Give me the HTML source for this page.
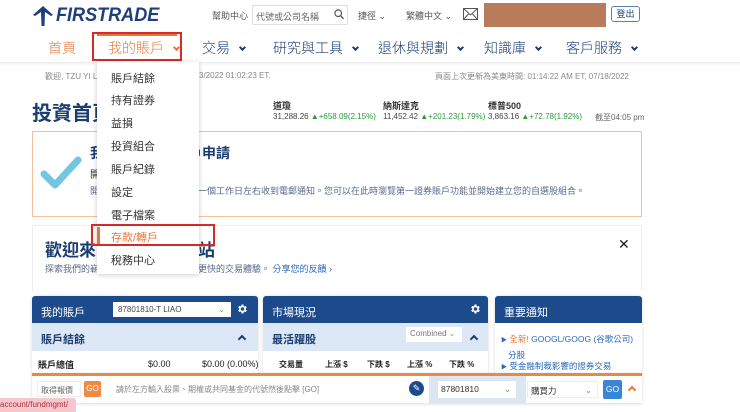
<!DOCTYPE html>
<html><head><meta charset="utf-8"><style>
*{margin:0;padding:0;box-sizing:border-box}
body{width:740px;height:410px;overflow:hidden;background:#fff;font-family:"Liberation Sans","Noto Sans CJK TC",sans-serif;position:relative;color:#333}
.a{position:absolute;white-space:nowrap}
.navy{color:#1c3d72}
.nav{font-size:14px;color:#1c3d72;top:38px;font-weight:300}
.chev{display:inline-block;width:5px;height:5px;border-right:2px solid currentColor;border-bottom:2px solid currentColor;transform:rotate(45deg);margin-left:10px;position:relative;top:-3px}
.dd{font-size:11px;color:#333;left:111px}
.panel{position:absolute;top:296px;background:#fff;box-shadow:0 0 3px rgba(0,0,0,.15);border-radius:3px 3px 0 0;overflow:hidden}
.ph{height:27px;background:#1d4a8a;color:#fff;font-size:11px;padding:8px 9px}
.sh{height:28px;background:#dce8f5;color:#1c3d72;font-size:11px;font-weight:bold;padding:8px 9px;position:relative}
.up{position:absolute;width:6px;height:6px;border-left:2px solid #1c3d72;border-top:2px solid #1c3d72;transform:rotate(45deg)}
</style></head><body>
<svg class="a" style="left:32px;top:6px" width="22" height="20" viewBox="0 0 22 20"><path d="M11 0 L21 9 L19 10 L13 6 L12.5 20 L9.5 20 L9 6 L3 10 L1 9 Z" fill="#1d3f7a"/></svg>
<div class="a" style="left:56px;top:5px;font-size:19px;font-weight:bold;font-style:italic;color:#1d3f7a;transform:scaleX(.95);transform-origin:left">FIRSTRADE</div>
<div class="a" style="left:212px;top:9px;font-size:9px;color:#555">幫助中心</div>
<div class="a" style="left:252px;top:5px;width:96px;height:20px;border:1px solid #ddd;border-radius:2px;font-size:9px;color:#666;padding:4px 3px">代號或公司名稱</div>
<svg class="a" style="left:334px;top:9px" width="10" height="11"><circle cx="4.2" cy="4.2" r="3.3" stroke="#555" stroke-width="1.2" fill="none"/><path d="M6.6 6.6 L9.5 9.8" stroke="#555" stroke-width="1.3"/></svg>
<div class="a" style="left:358px;top:9px;font-size:9px;color:#555">捷徑 ⌄</div>
<div class="a" style="left:406px;top:9px;font-size:9px;color:#555">繁體中文 ⌄</div>
<svg class="a" style="left:463px;top:8px" width="15" height="12"><rect x=".5" y=".5" width="14" height="11" fill="none" stroke="#555"/><path d="M.5 .5 L7.5 7 L14.5 .5 M.5 11.5 L5.5 6 M14.5 11.5 L9.5 6" stroke="#555" fill="none"/></svg>
<div class="a" style="left:484px;top:3px;width:122px;height:24px;background:#b97c5a"></div>
<div class="a" style="left:611px;top:6px;width:29px;height:16px;border:1px solid #5b7fb5;border-radius:3px;font-size:9px;color:#1c3d72;text-align:center;line-height:14px">登出</div>
<div class="a" style="left:0;top:62px;width:740px;height:4px;background:linear-gradient(#eee,#fff)"></div>
<div class="a nav" style="left:48px;color:#e8763a">首頁</div>
<div class="a" style="left:97px;top:33px;width:80px;height:3px;background:#e8763a"></div>
<div class="a nav" style="left:108px;color:#e8763a">我的賬戶<span class="chev"></span></div>
<div class="a" style="left:92px;top:32px;width:90px;height:29px;border:2px solid #d42a2a"></div>
<div class="a nav" style="left:202px">交易<span class="chev"></span></div>
<div class="a nav" style="left:273px">研究與工具<span class="chev"></span></div>
<div class="a nav" style="left:378px">退休與規劃<span class="chev"></span></div>
<div class="a nav" style="left:484px">知識庫<span class="chev"></span></div>
<div class="a nav" style="left:566px">客戶服務<span class="chev"></span></div>
<div class="a" style="left:45px;top:71px;font-size:8px;color:#888">歡迎, TZU YI LIAO</div>
<div class="a" style="left:199px;top:71px;font-size:8px;color:#888">3/2022 01:02:23 ET.</div>
<div class="a" style="left:435px;top:71px;font-size:8px;color:#888">頁面上次更新為美東時間: 01:14:22 AM ET, 07/18/2022</div>
<div class="a navy" style="left:32px;top:97px;font-size:20px;font-weight:bold">投資首頁</div>
<div class="a" style="left:273px;top:99px;font-size:9px;font-weight:bold;color:#333">道瓊</div>
<div class="a" style="left:273px;top:112px;font-size:8px;color:#444">31,288.26 <span style="color:#2a9a3a">▲+658.09(2.15%)</span></div>
<div class="a" style="left:383px;top:99px;font-size:9px;font-weight:bold;color:#333">納斯達克</div>
<div class="a" style="left:383px;top:112px;font-size:8px;color:#444">11,452.42 <span style="color:#2a9a3a">▲+201.23(1.79%)</span></div>
<div class="a" style="left:488px;top:99px;font-size:9px;font-weight:bold;color:#333">標普500</div>
<div class="a" style="left:488px;top:112px;font-size:8px;color:#444">3,863.16 <span style="color:#2a9a3a">▲+72.78(1.92%)</span></div>
<div class="a" style="left:595px;top:112px;font-size:8px;color:#666">截至04:05 pm</div>
<div class="a" style="left:32px;top:131px;width:610px;height:86px;border:1px solid #f3bf9d"></div>
<svg class="a" style="left:40px;top:154px" width="42" height="36"><path d="M4 20 L15 31 L38 6" stroke="#72c6e2" stroke-width="7" fill="none" stroke-linecap="round" stroke-linejoin="round"/></svg>
<div class="a navy" style="left:90px;top:143px;font-size:14px;font-weight:bold">我們已收到您開戶申請</div>
<div class="a" style="left:90px;top:166px;font-size:10px;color:#333">開</div>
<div class="a" style="left:90px;top:184px;font-size:9px;color:#5a6a8a">開戶申請已提交，您將會在一個工作日左右收到電郵通知。您可以在此時瀏覽第一證券賬戶功能並開始建立您的自選股組合。</div>
<div class="a" style="left:32px;top:225px;width:610px;height:66px;border:1px solid #eee;border-bottom:none"></div>
<div class="a navy" style="left:45px;top:236px;font-size:17px;font-weight:bold">歡迎來到第一證券網站</div>
<div class="a" style="left:45px;top:262px;font-size:9px;color:#5a6a8a">探索我們的嶄新網站，以享受更簡潔、更快的交易體驗。 <span style="color:#2a6ab8">分享您的反饋 ›</span></div>
<div class="a" style="left:618px;top:236px;font-size:14px;color:#222">✕</div>
<div class="a" style="left:97px;top:62px;width:102px;height:212px;background:#fff;box-shadow:0 1px 5px rgba(0,0,0,.2)"></div>
<div class="a dd" style="top:70px">賬戶結餘</div>
<div class="a dd" style="top:92px">持有證券</div>
<div class="a dd" style="top:115px">益損</div>
<div class="a dd" style="top:138px">投資組合</div>
<div class="a dd" style="top:161px">賬戶紀錄</div>
<div class="a dd" style="top:184px">設定</div>
<div class="a dd" style="top:207px">電子檔案</div>
<div class="a" style="left:97px;top:227px;width:3px;height:17px;background:#e8763a"></div>
<div class="a dd" style="top:229px;color:#e8763a">存款/轉戶</div>
<div class="a dd" style="top:252px">稅務中心</div>
<div class="a" style="left:91px;top:224px;width:124px;height:22px;border:2px solid #d42a2a"></div>
<div class="panel" style="left:32px;width:226px;height:80px">
<div class="ph">我的賬戶</div><div class="sh">賬戶結餘<span class="up" style="left:207px;top:13px"></span></div>
<div class="a" style="left:6px;top:62px;font-size:9px;font-weight:bold;color:#222">賬戶總值</div>
<div class="a" style="left:116px;top:63px;font-size:9px;color:#222">$0.00</div>
<div class="a" style="left:170px;top:63px;font-size:9px;color:#222">$0.00 (0.00%)</div>
</div>
<div class="a" style="left:113px;top:302px;width:118px;height:15px;background:#fff;font-size:8px;color:#444;padding:3px 5px">87801810-T LIAO<span style="position:absolute;right:6px;color:#888">⌄</span></div>
<svg class="a" style="left:236px;top:303px" width="12" height="12" viewBox="0 0 24 24"><path fill="#fff" d="M19.4 13a7.5 7.5 0 0 0 0-2l2.1-1.6-2-3.5-2.5 1a7.4 7.4 0 0 0-1.7-1L15 3h-4l-.4 2.8a7.4 7.4 0 0 0-1.7 1l-2.5-1-2 3.5L6.5 11a7.5 7.5 0 0 0 0 2l-2.1 1.6 2 3.5 2.5-1c.5.4 1.1.8 1.7 1L11 21h4l.4-2.8c.6-.3 1.2-.6 1.7-1l2.5 1 2-3.5zM13 15.5a3.5 3.5 0 1 1 0-7 3.5 3.5 0 0 1 0 7z"/></svg>
<div class="panel" style="left:263px;width:225px;height:80px">
<div class="ph">市場現況</div><div class="sh">最活躍股<span class="up" style="left:208px;top:13px"></span></div>
<div class="a" style="left:16px;top:63px;font-size:8px;color:#222;font-weight:bold;border-bottom:2px solid #f3bf9d;padding-bottom:3px">交易量</div>
<div class="a" style="left:62px;top:63px;font-size:8px;color:#222;font-weight:bold">上漲 $</div>
<div class="a" style="left:104px;top:63px;font-size:8px;color:#222;font-weight:bold">下跌 $</div>
<div class="a" style="left:144px;top:63px;font-size:8px;color:#222;font-weight:bold">上漲 %</div>
<div class="a" style="left:186px;top:63px;font-size:8px;color:#222;font-weight:bold">下跌 %</div>
</div>
<svg class="a" style="left:469px;top:303px" width="12" height="12" viewBox="0 0 24 24"><path fill="#fff" d="M19.4 13a7.5 7.5 0 0 0 0-2l2.1-1.6-2-3.5-2.5 1a7.4 7.4 0 0 0-1.7-1L15 3h-4l-.4 2.8a7.4 7.4 0 0 0-1.7 1l-2.5-1-2 3.5L6.5 11a7.5 7.5 0 0 0 0 2l-2.1 1.6 2 3.5 2.5-1c.5.4 1.1.8 1.7 1L11 21h4l.4-2.8c.6-.3 1.2-.6 1.7-1l2.5 1 2-3.5zM13 15.5a3.5 3.5 0 1 1 0-7 3.5 3.5 0 0 1 0 7z"/></svg>
<div class="a" style="left:406px;top:327px;width:56px;height:15px;background:#fff;font-size:8px;color:#777;padding:2px 4px">Combined <span style="color:#999">⌄</span></div>
<div class="panel" style="left:495px;width:147px;height:80px">
<div class="ph">重要通知</div>
<div class="a" style="left:6px;top:36px;font-size:8.5px;color:#2a6ab8;line-height:14px"><span style="font-size:6px">▶</span> <span style="color:#e8763a">全新!</span> GOOGL/GOOG (谷歌公司)<br>&nbsp;&nbsp;&nbsp;分股</div>
<div class="a" style="left:6px;top:64px;font-size:8.5px;color:#2a6ab8"><span style="font-size:6px">▶</span> 受金融制裁影響的證券交易</div>
</div>
<div class="a" style="left:32px;top:373px;width:610px;height:30px;background:#fff;border-top:3px solid #e8884a;box-shadow:0 1px 3px rgba(0,0,0,.15)"></div>
<div class="a" style="left:429px;top:376px;width:97px;height:27px;background:#dce6f0"></div>
<div class="a" style="left:37px;top:381px;width:44px;height:16px;border:1px solid #eee;font-size:8px;color:#666;padding:3px 3px">取得報價</div>
<div class="a" style="left:84px;top:381px;width:17px;height:16px;background:#ef8a45;color:#fff;font-size:8px;text-align:center;line-height:16px;border-radius:2px">GO</div>
<div class="a" style="left:116px;top:384px;font-size:8px;color:#888">請於左方輸入股票、期權或共同基金的代號然後點擊 [GO]</div>
<div class="a" style="left:409px;top:381px;width:15px;height:15px;border-radius:50%;background:#1d4a8a;color:#fff;font-size:9px;text-align:center;line-height:15px">✎</div>
<div class="a" style="left:438px;top:381px;width:78px;height:17px;background:#fff;font-size:8.5px;color:#333;padding:3px 3px">87801810<span style="position:absolute;right:5px;color:#888">⌄</span></div>
<div class="a" style="left:527px;top:381px;width:71px;height:17px;background:#fff;border:1px solid #eee;font-size:8.5px;color:#333;padding:3px 3px">購買力<span style="position:absolute;right:5px;color:#888">⌄</span></div>
<div class="a" style="left:603px;top:380px;width:19px;height:19px;background:#3a86d6;color:#fff;font-size:8.5px;text-align:center;line-height:19px;border-radius:2px">GO</div>
<div class="a" style="left:629px;top:387px;width:6px;height:6px;border-left:2px solid #e8763a;border-top:2px solid #e8763a;transform:rotate(45deg)"></div>
<div class="a" style="left:0;top:398px;width:76px;height:14px;background:#f8c6cf;font-size:8px;color:#a33;padding:2px 0 0 0;border-radius:0 3px 0 0">account/fundmgmt/</div>
</body></html>
